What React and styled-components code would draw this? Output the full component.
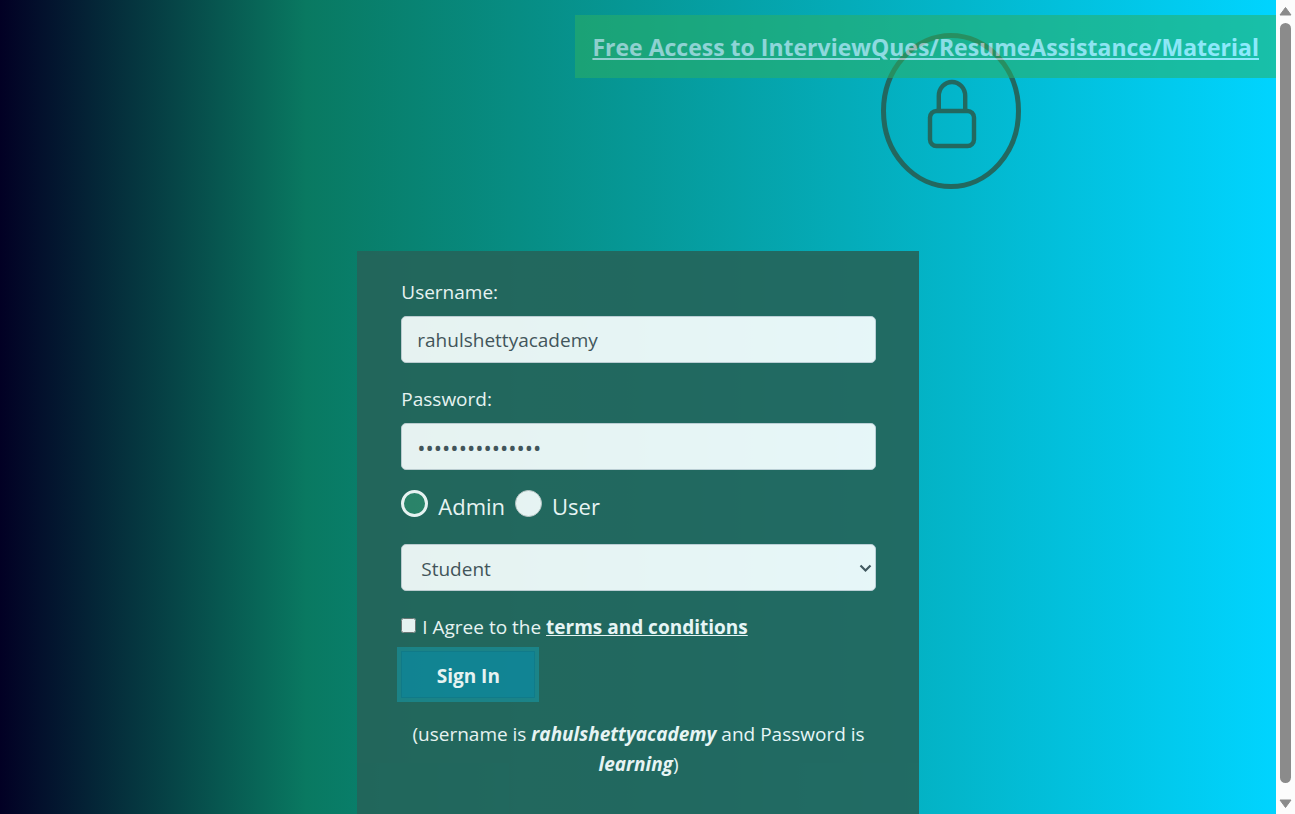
import React from "react";
import styled, { createGlobalStyle } from "styled-components";

const GlobalStyle = createGlobalStyle`
  * { box-sizing: border-box; }
  body {
    margin: 0;
    font-family: "Open Sans", "Noto Sans", sans-serif;
    font-size: 19px;
    line-height: 30px;
    color: #fff;
  }
`;

const Window = styled.div`
  display: grid;
  grid-template-columns: minmax(0, 1fr) 19px;
  height: 100vh;
  overflow: hidden;
`;

const Page = styled.main`
  position: relative;
  display: flex;
  flex-direction: column;
  height: 100vh;
  overflow: hidden;
  background: linear-gradient(90deg, #020024 0%, #097961 24%, #00d4ff 100%);
`;

const Banner = styled.a`
  position: absolute;
  top: 15px;
  right: 0;
  z-index: 1;
  padding: 16px 17px 14px;
  background: #2cb064;
  color: #fff;
  opacity: 0.55;
  font-size: 23px;
  line-height: 33px;
  font-weight: 700;
  white-space: nowrap;
  text-decoration: underline;
`;

const Emblem = styled.div`
  padding: 33px 0 62px 1px;
  margin-left: 69%;
  opacity: 0.95;

  svg { display: block; }
`;

const Card = styled.form`
  display: flex;
  flex-direction: column;
  flex: 1 0 auto;
  width: 44%;
  margin: 0 auto;
  padding: 26px 43px 46px 44px;
  background: #25645a;
  opacity: 0.9;
`;

const Field = styled.div`
  display: flex;
  flex-direction: column;
  gap: 9px;
  margin-bottom: 21px;
`;

const controlStyle = `
  width: 100%;
  height: 47px;
  padding: 0 15px;
  border: 1px solid #ced4da;
  border-radius: 5px;
  background: #fff;
  color: #495057;
  font: inherit;
`;

const TextInput = styled.input`
  ${controlStyle}

  &[type="password"] { font-size: 22px; }
`;

const Select = styled.select`
  ${controlStyle}
  appearance: none;
  padding: 2px 19px 0;
`;

const SelectBox = styled.div`
  display: grid;
  align-items: center;

  > * { grid-area: 1 / 1; }
  > svg {
    justify-self: end;
    margin-right: 4px;
    pointer-events: none;
  }
`;

const RadioRow = styled.div`
  display: flex;
  gap: 10px;
  margin: -1px 0 21px;
`;

const RadioLabel = styled.label`
  display: flex;
  gap: 10px;
  font-size: 22px;
  line-height: 33px;
`;

const Radio = styled.input`
  appearance: none;
  width: 27px;
  height: 27px;
  margin: 0;
  border: 1px solid #ccc;
  border-radius: 50%;
  background: #fff;

  &:checked {
    background: #2e8469;
    border: 3px solid #fff;
  }
`;

const AgreeRow = styled.div`
  display: flex;
  align-items: center;
  gap: 6px;
  margin-bottom: 9px;
`;

const Checkbox = styled.input`
  width: 15px;
  height: 15px;
  margin: 0 0 3px;
`;

const TermsLink = styled.a`
  color: #fff;
  font-weight: 700;
`;

const SignInButton = styled.button`
  align-self: flex-start;
  width: 134px;
  height: 47px;
  margin-bottom: 21px;
  padding: 2px 0 0;
  border: 1px solid #117a8b;
  border-radius: 0;
  background: #138496;
  box-shadow: 0 0 0 4px rgba(23, 162, 184, 0.5);
  color: #fff;
  font: inherit;
  font-weight: 700;
`;

const Hint = styled.p`
  margin: 0;
  text-align: center;
`;

const Scrollbar = styled.div`
  display: flex;
  flex-direction: column;
  align-items: center;
  gap: 6px;
  padding: 6px 0 5px;
  background: #fcfcfc;
`;

const Thumb = styled.div`
  flex: 1;
  width: 11px;
  margin-bottom: 9px;
  border-radius: 6px;
  background: #8b8b8b;
`;

const LockEmblem = () => (
  <svg width="140" height="156" viewBox="0 0 140 156" fill="none" stroke="#25645a" aria-hidden="true">
    <ellipse cx="70" cy="78" rx="67.5" ry="75.5" strokeWidth="5" />
    <rect x="49" y="78" width="44" height="35" rx="6.5" strokeWidth="4.4" />
    <path d="M57.8 78V63a13.2 14 0 0 1 26.4 0v15" strokeWidth="4.4" />
  </svg>
);

const Arrow = ({ d }) => (
  <svg width="13" height="11" viewBox="0 0 13 11" fill="#8b8b8b" stroke="#8b8b8b" strokeLinejoin="round" aria-hidden="true">
    <path d={d} />
  </svg>
);

const Chevron = () => (
  <svg width="13" height="10" viewBox="0 0 13 10" fill="none" stroke="#495057" strokeWidth="2.2" aria-hidden="true">
    <path d="M1.5 2.5L6.5 7.5L11.5 2.5" />
  </svg>
);

export default function App() {
  return (
    <Window>
      <GlobalStyle />
      <Page>
        <Banner href="#material">Free Access to InterviewQues/ResumeAssistance/Material</Banner>
        <Emblem>
          <LockEmblem />
        </Emblem>
        <Card onSubmit={(e) => e.preventDefault()}>
          <Field>
            <label htmlFor="username">Username:</label>
            <TextInput id="username" type="text" defaultValue="rahulshettyacademy" />
          </Field>
          <Field>
            <label htmlFor="password">Password:</label>
            <TextInput id="password" type="password" defaultValue="learninglearnin" />
          </Field>
          <RadioRow>
            <RadioLabel>
              <Radio type="radio" name="role" value="admin" defaultChecked />
              Admin
            </RadioLabel>
            <RadioLabel>
              <Radio type="radio" name="role" value="user" />
              User
            </RadioLabel>
          </RadioRow>
          <Field>
            <SelectBox>
              <Select aria-label="Occupation" defaultValue="stud">
                <option value="stud">Student</option>
                <option value="teach">Teacher</option>
                <option value="consult">Consultant</option>
              </Select>
              <Chevron />
            </SelectBox>
          </Field>
          <AgreeRow>
            <Checkbox id="terms" type="checkbox" />
            <label htmlFor="terms">
              I Agree to the <TermsLink href="#terms">terms and conditions</TermsLink>
            </label>
          </AgreeRow>
          <SignInButton type="submit">Sign In</SignInButton>
          <Hint>
            (username is <b><i>rahulshettyacademy</i></b> and Password is <b><i>learning</i></b>)
          </Hint>
        </Card>
      </Page>
      <Scrollbar aria-hidden="true">
        <Arrow d="M6.5 1.5L12 9H1z" />
        <Thumb />
        <Arrow d="M6.5 9.5L12 2H1z" />
      </Scrollbar>
    </Window>
  );
}
